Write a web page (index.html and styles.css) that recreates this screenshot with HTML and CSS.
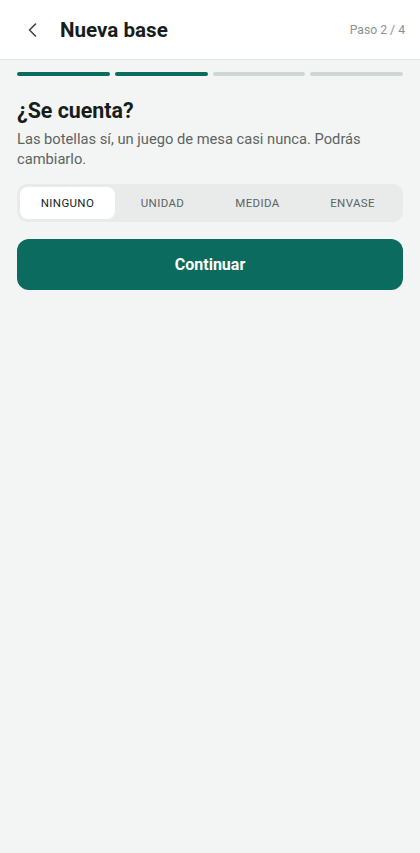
FILE: index.html
```html
<!DOCTYPE html>
<html lang="es">
<head>
<meta charset="utf-8">
<title>Nueva base</title>
<link rel="stylesheet" href="styles.css">
</head>
<body>
<header class="topbar">
  <button class="back" aria-label="Volver">
    <svg width="14" height="16" viewBox="0 0 14 16"><path d="M9.5 2 L3.5 8 L9.5 14" fill="none" stroke="#3d4543" stroke-width="1.6" stroke-linecap="round" stroke-linejoin="round"/></svg>
  </button>
  <h1 class="title">Nueva base</h1>
  <span class="step">Paso 2 / 4</span>
</header>
<main class="content">
  <div class="progress">
    <span class="seg on"></span>
    <span class="seg on"></span>
    <span class="seg"></span>
    <span class="seg"></span>
  </div>
  <h2 class="question">¿Se cuenta?</h2>
  <p class="hint">Las botellas sí, un juego de mesa casi nunca. Podrás cambiarlo.</p>
  <div class="segmented">
    <button class="opt active">NINGUNO</button>
    <button class="opt">UNIDAD</button>
    <button class="opt">MEDIDA</button>
    <button class="opt">ENVASE</button>
  </div>
  <button class="primary">Continuar</button>
</main>
</body>
</html>
```
FILE: styles.css
```css
* { box-sizing: border-box; }
html, body { margin: 0; padding: 0; }
body {
  background: #f3f5f4;
  font-family: Roboto, "Noto Sans", "Liberation Sans", sans-serif;
  color: #161d1b;
  min-height: 853px;
}
.topbar {
  height: 60px;
  background: #ffffff;
  border-bottom: 1px solid #e2e5e4;
  display: flex;
  align-items: center;
  padding: 0 15px 0 22px;
}
.back {
  border: 0;
  background: none;
  padding: 0;
  width: 22px;
  height: 22px;
  display: flex;
  align-items: center;
  justify-content: center;
  margin-right: 16px;
}
.title {
  margin: 0;
  font-size: 20.6px;
  font-weight: 700;
  color: #161d1b;
  flex: 1;
}
.step {
  font-size: 12.2px;
  color: #8b9391;
}
.content {
  padding: 12px 17px 0;
}
.progress {
  display: flex;
  gap: 5px;
  height: 4px;
}
.seg {
  flex: 1;
  border-radius: 2px;
  background: #cfd7d5;
}
.seg.on { background: #0b6b5e; }
.question {
  margin: 21px 0 0;
  font-size: 21.4px;
  line-height: 28px;
  font-weight: 700;
  color: #161d1b;
}
.hint {
  margin: 4px 0 0;
  font-size: 14.7px;
  line-height: 20px;
  color: #5b6462;
}
.segmented {
  margin-top: 15px;
  display: flex;
  padding: 3px;
  background: #e8ebea;
  border-radius: 10px;
  height: 38px;
}
.opt {
  flex: 1;
  border: 0;
  background: transparent;
  border-radius: 8px;
  font-family: inherit;
  font-size: 11.5px;
  font-weight: 400;
  letter-spacing: 0.35px;
  color: #5b6462;
}
.opt.active {
  background: #ffffff;
  color: #161d1b;
}
.primary {
  margin-top: 17px;
  width: 100%;
  height: 51px;
  border: 0;
  border-radius: 12px;
  background: #0b6b5e;
  color: #ffffff;
  font-family: inherit;
  font-size: 16px;
  font-weight: 700;
}
```
